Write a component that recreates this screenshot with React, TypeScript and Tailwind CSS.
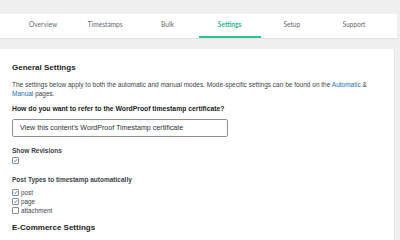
const tabs = ['Overview', 'Timestamps', 'Bulk', 'Settings', 'Setup', 'Support'];

function Check({ checked }: { checked: boolean }) {
  return (
    <span className="w-[7px] h-[7px] border border-[#8c8f94] rounded-[1px] bg-white flex items-center justify-center shrink-0">
      {checked && (
        <svg viewBox="0 0 10 10" className="w-[7px] h-[7px]">
          <path d="M2 5.2 L4.2 7.4 L8.4 2.4" fill="none" stroke="#2271b1" strokeWidth="1.6" />
        </svg>
      )}
    </span>
  );
}

export default function App() {
  return (
    <div className="w-[400px] h-[240px] bg-[#f0f0f1] overflow-hidden pt-[14px] font-['Liberation_Sans',Arial,sans-serif] text-[#3c434a]">
      <nav className="h-[24px] bg-white mr-[3px] shadow-[0_1px_1px_rgba(0,0,0,0.06)] flex px-[12px] font-['Lato','Open_Sans',sans-serif]">
        {tabs.map((t) => (
          <div
            key={t}
            className={`flex-1 flex items-center justify-center text-[6.6px] border-b-[2px] ${
              t === 'Settings' ? 'border-[#2bc49c] text-[#2bb893] font-bold' : 'border-transparent text-[#646970]'
            }`}
          >
            {t}
          </div>
        ))}
      </nav>
      <section className="mt-[11px] mr-[5px] h-[200px] bg-white border-r border-[#e2e4e7] pl-[12px] pt-[14px]">
        <h2 className="text-[8px] leading-[10px] font-bold text-[#1d2327]">General Settings</h2>
        <p className="mt-[7px] text-[6.5px] leading-[9px] pr-[20px]">
          The settings below apply to both the automatic and manual modes. Mode-specific settings can be found on the{' '}
          <span className="text-[#2271b1]">Automatic</span> &amp; <span className="text-[#2271b1]">Manual</span> pages.
        </p>
        <p className="mt-[6px] text-[6.8px] leading-[9px] font-bold text-[#1d2327]">
          How do you want to refer to the WordProof timestamp certificate?
        </p>
        <div className="mt-[6px] w-[216px] h-[18px] border border-[#8c8f94] rounded-[2px] flex items-center pl-[7px] text-[7.1px] text-[#2c3338]">
          View this content's WordProof Timestamp certificate
        </div>
        <p className="mt-[9px] text-[6.5px] leading-[9px] font-bold text-[#3c434a]">Show Revisions</p>
        <div className="mt-[1px] h-[8px] flex items-center">
          <Check checked />
        </div>
        <p className="mt-[11px] text-[6.5px] leading-[9px] font-bold text-[#3c434a]">Post Types to timestamp automatically</p>
        <div className="mt-[4px] flex flex-col text-[6.3px] leading-[9px]">
          {[
            ['post', true],
            ['page', true],
            ['attachment', false],
          ].map(([label, c]) => (
            <div key={label as string} className="flex items-center gap-[2px] h-[9px]">
              <Check checked={c as boolean} />
              <span>{label as string}</span>
            </div>
          ))}
        </div>
        <h2 className="mt-[8px] text-[8px] leading-[10px] font-bold text-[#1d2327]">E-Commerce Settings</h2>
      </section>
    </div>
  );
}
